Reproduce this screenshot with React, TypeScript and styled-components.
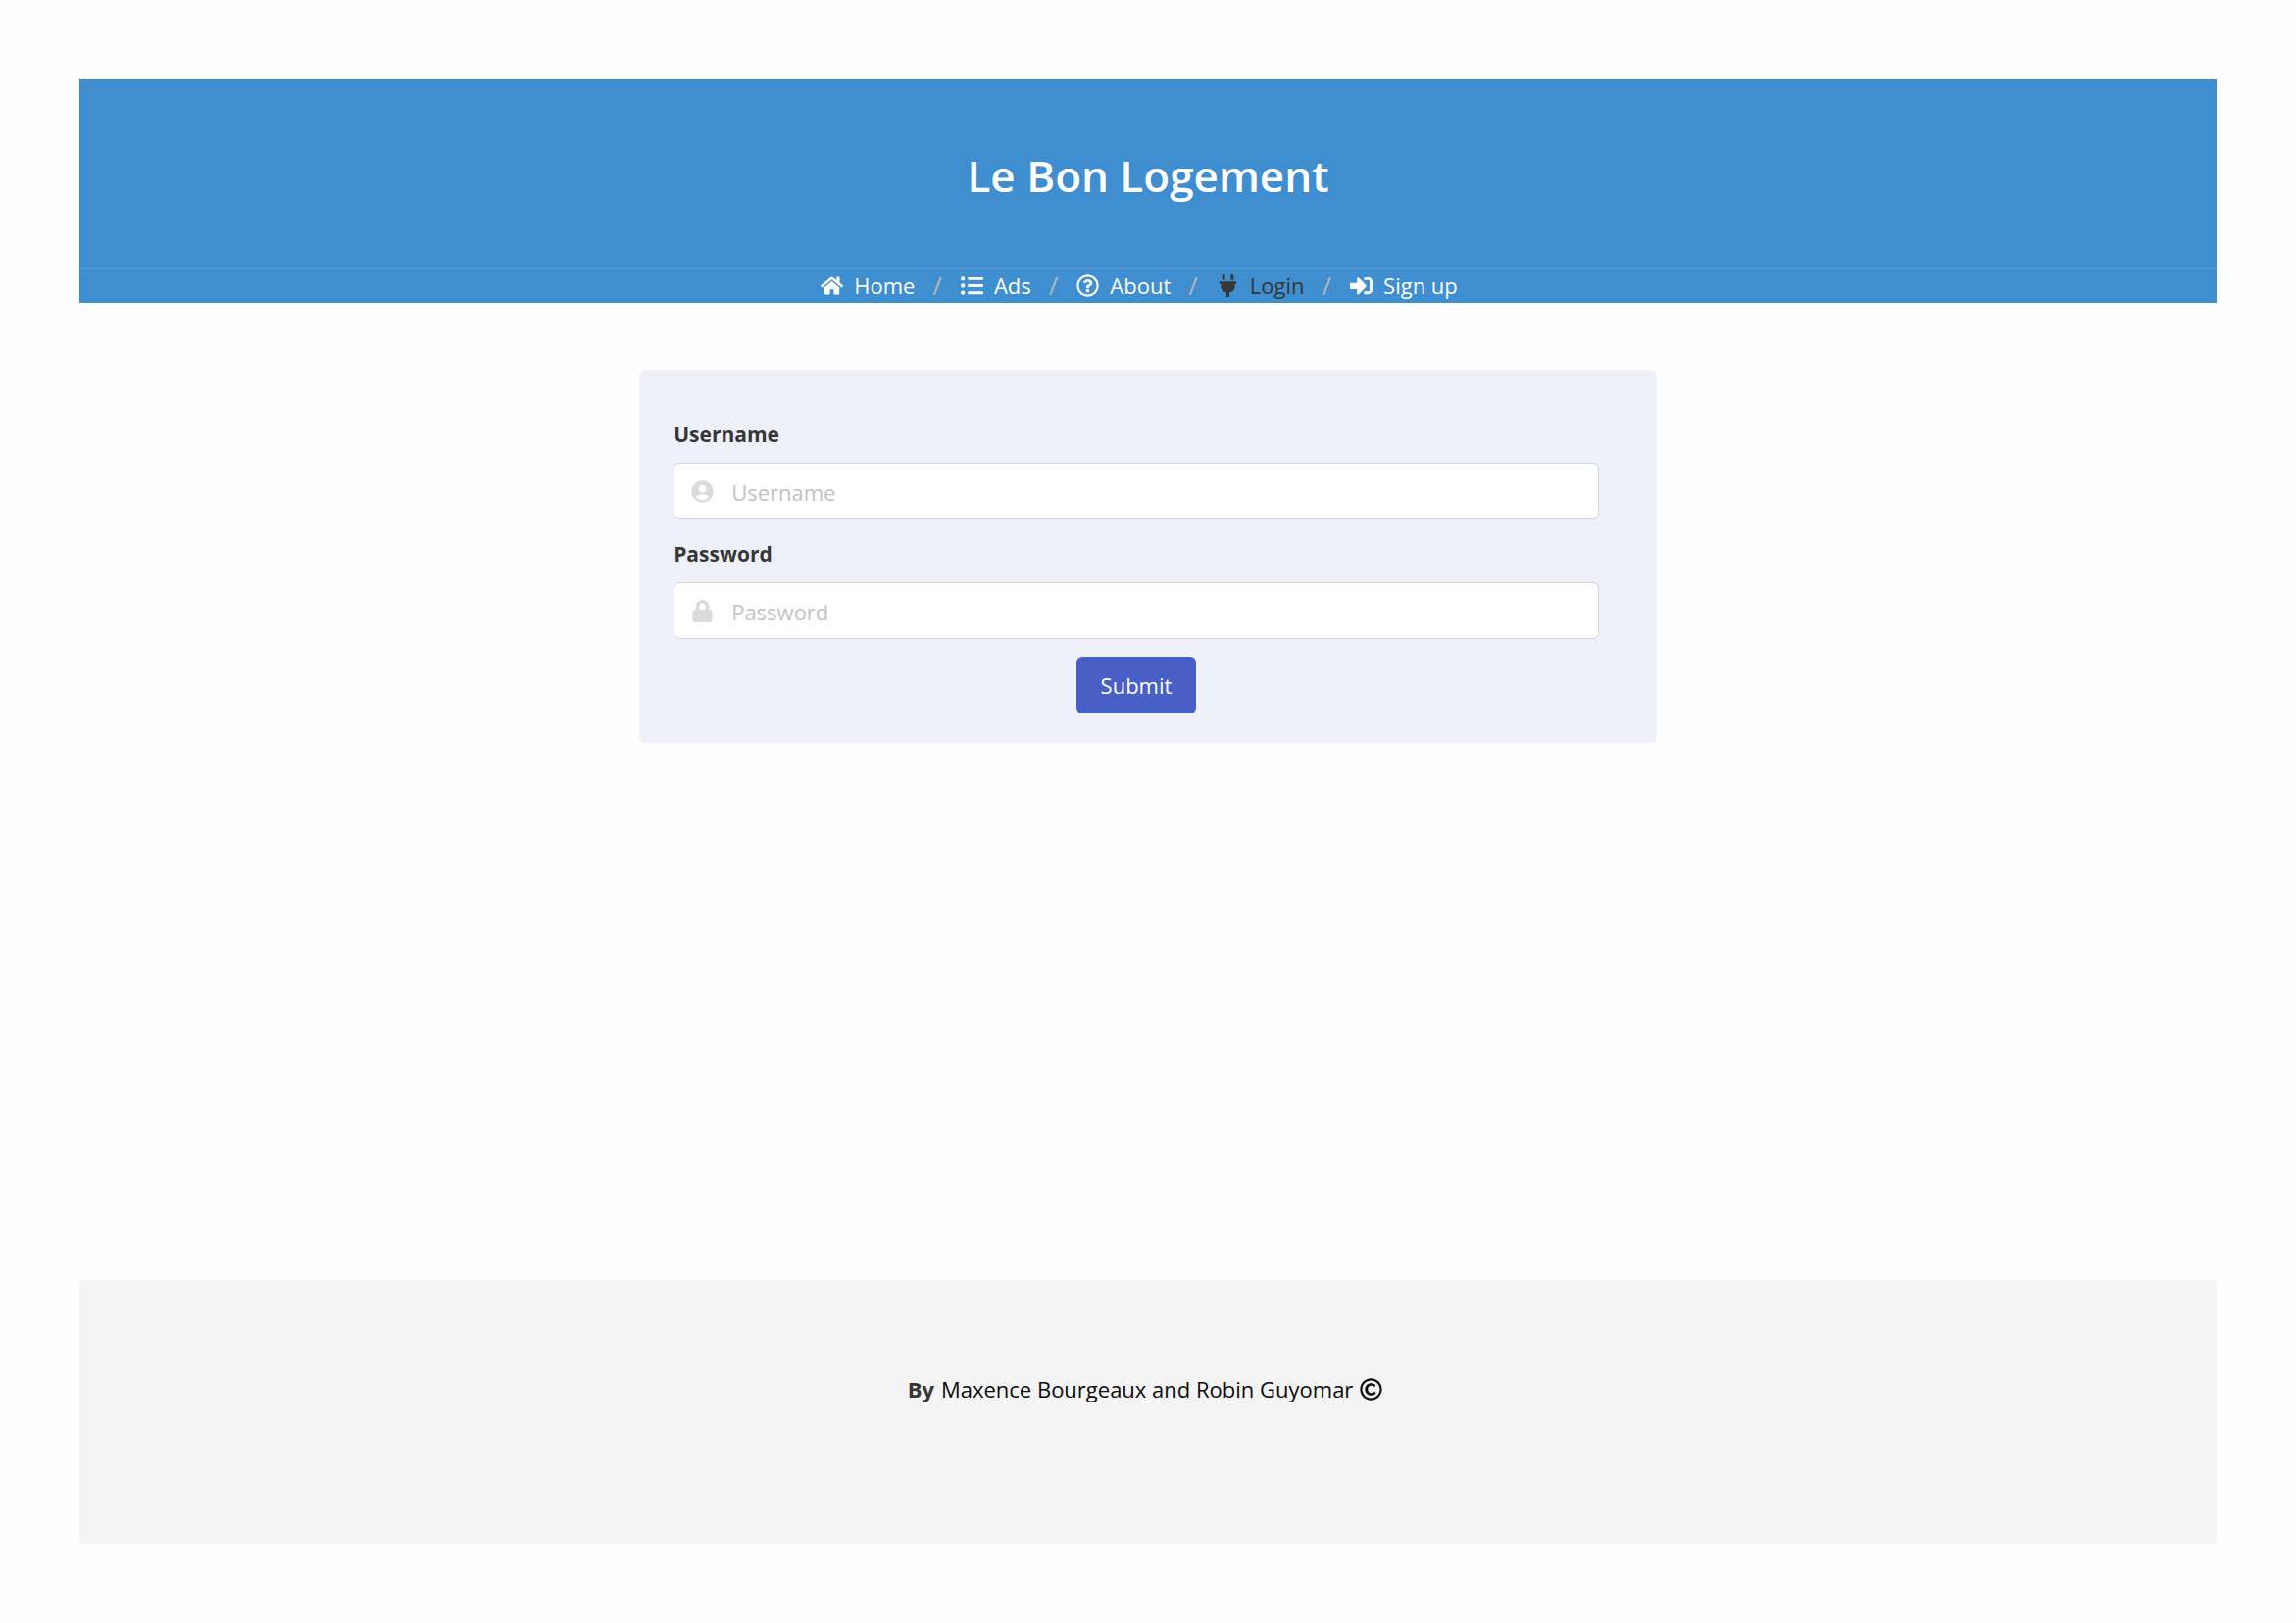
import React from "react";
import styled, { createGlobalStyle } from "styled-components";
import {
  FaHome,
  FaListUl,
  FaRegQuestionCircle,
  FaPlug,
  FaSignInAlt,
  FaUserCircle,
  FaLock,
  FaRegCopyright,
} from "react-icons/fa";

const GlobalStyle = createGlobalStyle`
  *, *::before, *::after { box-sizing: border-box; }
  body {
    margin: 0;
    background: #fefefe;
    color: #363636;
    font: 400 22px/35px "Open Sans", "Noto Sans", sans-serif;
  }
`;

const Page = styled.div`
  min-height: 100vh;
  padding: 81px;
  display: flex;
  flex-direction: column;
`;

const Header = styled.header`
  background: #3e8ed0;
  color: #fff;
  text-align: center;
`;

const Title = styled.h1`
  margin: 0;
  padding: 72px 35px 68px;
  font-size: 44px;
  font-weight: 600;
  line-height: 52px;
`;

const Crumbs = styled.ol`
  list-style: none;
  margin: 0;
  padding: 0 24px 0 0;
  border-top: 1px solid #5c9fd8;
  display: flex;
  justify-content: center;
`;

const Crumb = styled.li`
  display: flex;

  & + &::before {
    content: "/";
    color: #b5b5b5;
    font-size: 26px;
    margin: 0 13px 0 18px;
  }
`;

const CrumbLink = styled.a<{ $active?: boolean }>`
  display: flex;
  align-items: center;
  gap: 5px;
  color: ${(p) => (p.$active ? "#363636" : "#fff")};
  text-decoration: none;
`;

const IconBox = styled.span`
  width: 35px;
  display: flex;
  justify-content: center;
  font-size: 23px;

  svg {
    width: auto;
    height: 23px;
  }
`;

const Main = styled.main`
  flex: 1;
  padding: 69px 0;
`;

const LoginForm = styled.form`
  width: 47.6%;
  margin: 0 auto;
  padding: 48px 59px 30px 35px;
  display: flex;
  flex-direction: column;
  gap: 18px;
  background: #eef1fa;
  border-radius: 6px;
`;

const Field = styled.div`
  display: flex;
  flex-direction: column;
  gap: 11px;
`;

const Label = styled.label`
  font-size: 21px;
  font-weight: 700;
`;

const Control = styled.div`
  height: 58px;
  padding: 0 11px;
  display: flex;
  align-items: center;
  gap: 12px;
  background: #fff;
  border: 1px solid #d5d5d5;
  border-radius: 6px;
  color: #dbdbdb;
`;

const Input = styled.input`
  flex: 1;
  min-width: 0;
  padding: 3px 0 0;
  border: 0;
  outline: 0;
  background: transparent;
  color: #363636;
  font: inherit;

  &::placeholder {
    color: #c3c3c3;
    opacity: 1;
  }
`;

const SubmitButton = styled.button`
  align-self: center;
  height: 58px;
  padding: 0 25px;
  border: 0;
  border-radius: 6px;
  background: #485fc7;
  color: #fff;
  font: inherit;
  cursor: pointer;
`;

const Footer = styled.footer`
  padding: 94px 41px 140px 35px;
  background: #f4f4f4;
  color: #0a0a0a;
  display: flex;
  justify-content: center;
  align-items: center;
  gap: 7px;

  strong {
    color: #363636;
  }
`;

const links = [
  { label: "Home", icon: FaHome },
  { label: "Ads", icon: FaListUl },
  { label: "About", icon: FaRegQuestionCircle },
  { label: "Login", icon: FaPlug, active: true },
  { label: "Sign up", icon: FaSignInAlt },
];

const fields = [
  { id: "username", label: "Username", type: "text", icon: FaUserCircle },
  { id: "password", label: "Password", type: "password", icon: FaLock },
];

export default function App() {
  return (
    <>
      <GlobalStyle />
      <Page>
        <Header>
          <Title>Le Bon Logement</Title>
          <nav aria-label="breadcrumbs">
            <Crumbs>
              {links.map(({ label, icon: Icon, active }) => (
                <Crumb key={label}>
                  <CrumbLink href="#" $active={active} aria-current={active ? "page" : undefined}>
                    <IconBox>
                      <Icon aria-hidden />
                    </IconBox>
                    {label}
                  </CrumbLink>
                </Crumb>
              ))}
            </Crumbs>
          </nav>
        </Header>
        <Main>
          <LoginForm onSubmit={(e: React.FormEvent) => e.preventDefault()}>
            {fields.map(({ id, label, type, icon: Icon }) => (
              <Field key={id}>
                <Label htmlFor={id}>{label}</Label>
                <Control>
                  <IconBox>
                    <Icon aria-hidden />
                  </IconBox>
                  <Input id={id} type={type} placeholder={label} />
                </Control>
              </Field>
            ))}
            <SubmitButton type="submit">Submit</SubmitButton>
          </LoginForm>
        </Main>
        <Footer>
          <strong>By</strong>
          <span>Maxence Bourgeaux and Robin Guyomar</span>
          <FaRegCopyright size={23} aria-label="copyright" />
        </Footer>
      </Page>
    </>
  );
}
